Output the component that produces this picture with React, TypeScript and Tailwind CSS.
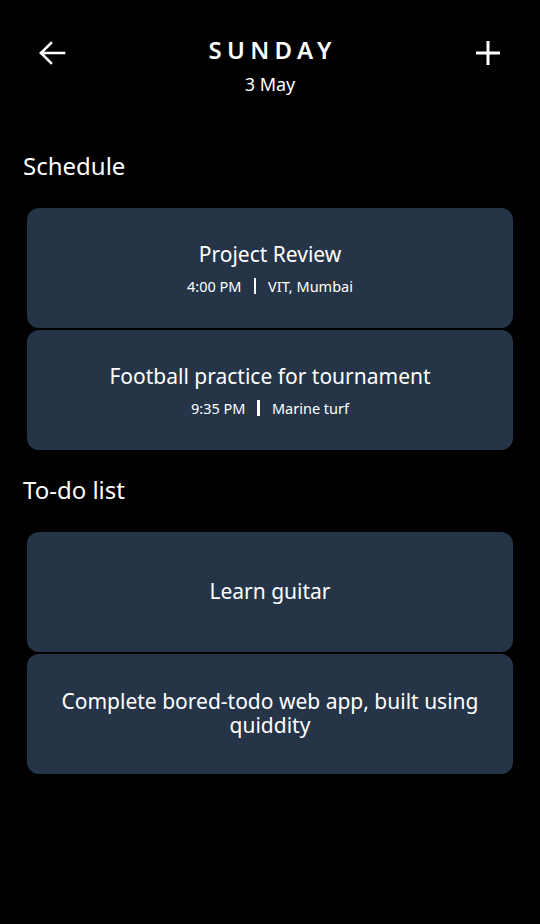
const schedule = [
  { title: 'Project Review', time: '4:00 PM', place: 'VIT, Mumbai' },
  { title: 'Football practice for tournament', time: '9:35 PM', place: 'Marine turf' },
];

const todos = ['Learn guitar', 'Complete bored-todo web app, built using quiddity'];

export default function App() {
  return (
    <div className="min-h-screen bg-black text-white font-['Noto_Sans',sans-serif]">
      {/* Header */}
      <header className="flex items-start justify-between px-[38px] pt-[36px]">
        <button className="mt-[3px] h-[28px] w-[28px] text-white">
          <svg viewBox="0 0 28 28" className="h-[28px] w-[28px]" fill="none" stroke="currentColor" strokeWidth={2.6} strokeLinecap="square">
            <path d="M3 14h23M13 4 3 14l10 10" />
          </svg>
        </button>

        <div className="flex flex-col items-center">
          <h1 className="text-[24px] font-semibold leading-[28px] tracking-[0.22em] pl-[0.22em]">SUNDAY</h1>
          <p className="mt-[8px] text-[18px] leading-[24px]">3 May</p>
        </div>

        <button className="mt-[3px] h-[28px] w-[28px] text-white">
          <svg viewBox="0 0 28 28" className="h-[28px] w-[28px]" fill="none" stroke="currentColor" strokeWidth={3}>
            <path d="M14 2v24M2 14h24" />
          </svg>
        </button>
      </header>

      {/* Schedule */}
      <section className="mt-[54px]">
        <h2 className="px-[23px] text-[24px] leading-[32px]">Schedule</h2>
        <div className="mt-[26px] flex flex-col gap-[2px] px-[27px]">
          {schedule.map((item) => (
            <div
              key={item.title}
              className="flex h-[120px] flex-col items-center justify-center rounded-[12px] bg-[#253547] px-6 pb-[1px] text-center"
            >
              <p className="text-[21px] leading-[28px]">{item.title}</p>
              <div className="mt-[8px] flex items-center text-[14.5px] leading-[20px]">
                <span>{item.time}</span>
                <span className="mx-[12px] h-[16px] w-[2.5px] bg-white" />
                <span>{item.place}</span>
              </div>
            </div>
          ))}
        </div>
      </section>

      {/* To-do list */}
      <section className="mt-[24px]">
        <h2 className="px-[23px] text-[24px] leading-[32px]">To-do list</h2>
        <div className="mt-[26px] flex flex-col gap-[2px] px-[27px]">
          {todos.map((t) => (
            <div
              key={t}
              className="flex h-[120px] items-center justify-center rounded-[12px] bg-[#253547] px-8 pb-[2px] text-center"
            >
              <p className="text-[21px] leading-[24px]">{t}</p>
            </div>
          ))}
        </div>
      </section>
    </div>
  );
}
